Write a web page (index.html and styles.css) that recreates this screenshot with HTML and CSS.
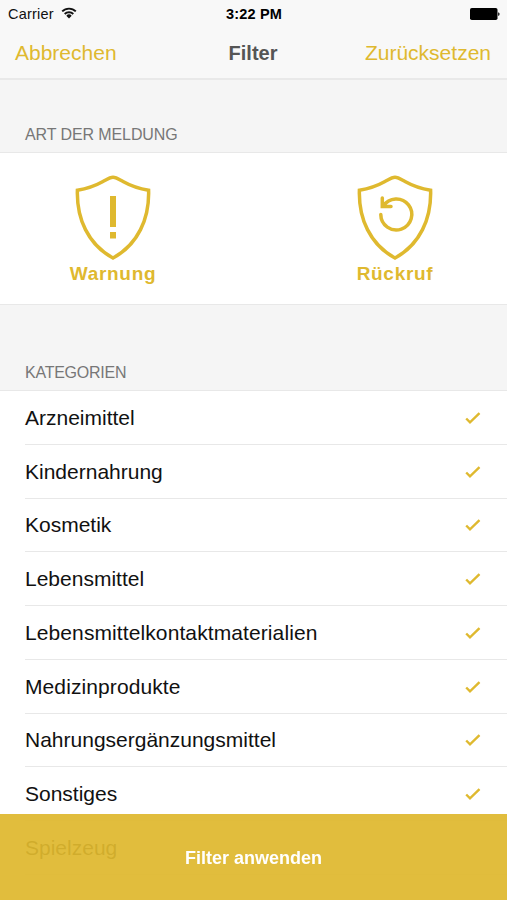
FILE: index.html
```html
<!DOCTYPE html>
<html lang="de">
<head>
    <meta charset="UTF-8">
    <meta name="viewport" content="width=device-width, initial-scale=1.0">
    <title>Filter</title>
    <link rel="stylesheet" href="styles.css">
</head>
<body>

    <header class="header">
        <div class="status-bar">
            <div class="carrier">
                <span class="carrier-name">Carrier</span>
                <svg class="wifi" viewBox="0 0 16 12">
                    <path d="M1.2 4.4a9.6 9.6 0 0 1 13.6 0M3.7 7a6.1 6.1 0 0 1 8.6 0" fill="none" stroke="#111" stroke-width="1.9"/>
                    <path d="M5.3 8.7a3.8 3.8 0 0 1 5.4 0L8 11.5z" fill="#111"/>
                </svg>
            </div>
            <span class="time">3:22 PM</span>
            <svg class="battery" viewBox="0 0 30 12">
                <rect x="0" y="0" width="27.5" height="12" rx="1.8"/>
                <path d="M28.2 4.2a2 2 0 0 1 0 3.8z"/>
            </svg>
        </div>
        <nav class="nav-bar">
            <a class="nav-link">Abbrechen</a>
            <h1 class="title">Filter</h1>
            <a class="nav-link reset">Zurücksetzen</a>
        </nav>
    </header>

    <h2 class="section-title">ART DER MELDUNG</h2>
    <div class="types">
        <div class="type">
            <svg class="shield" viewBox="0 0 80 88">
                <path d="M40 3.3C37 3.3 34 5.3 30 7.5C22.5 11.7 14 14.7 4.4 16.2C3.5 44.5 15 70.5 40 84C65 70.5 76.500 44.5 75.6 16.2C66 14.7 57.5 11.7 50 7.5C46 5.3 43 3.3 40 3.3Z"/>
                <path class="mark" d="M40 22v31M40 58v6.5"/>
            </svg>
            <span class="type-name">Warnung</span>
        </div>
        <div class="type">
            <svg class="shield" viewBox="0 0 80 88">
                <path d="M40 3.3C37 3.3 34 5.3 30 7.5C22.5 11.7 14 14.7 4.4 16.2C3.5 44.5 15 70.5 40 84C65 70.5 76.500 44.5 75.6 16.2C66 14.7 57.5 11.7 50 7.5C46 5.3 43 3.3 40 3.3Z"/>
                <path class="arrow" d="M25.8 40.5A15.500 15.500 0 1 0 28.3 32M27.3 24V32.4H36"/>
            </svg>
            <span class="type-name">Rückruf</span>
        </div>
    </div>

    <h2 class="section-title categories-title">KATEGORIEN</h2>
    <ul class="categories">
        <li><span>Arzneimittel</span><svg class="check" viewBox="0 0 16 12"><path d="M1.2 6.5L5 10.3L14.5 1.2"/></svg></li>
        <li><span>Kindernahrung</span><svg class="check" viewBox="0 0 16 12"><path d="M1.2 6.5L5 10.3L14.5 1.2"/></svg></li>
        <li><span>Kosmetik</span><svg class="check" viewBox="0 0 16 12"><path d="M1.2 6.5L5 10.3L14.5 1.2"/></svg></li>
        <li><span>Lebensmittel</span><svg class="check" viewBox="0 0 16 12"><path d="M1.2 6.5L5 10.3L14.5 1.2"/></svg></li>
        <li><span class="wide">Lebensmittelkontaktmaterialien</span><svg class="check" viewBox="0 0 16 12"><path d="M1.2 6.5L5 10.3L14.5 1.2"/></svg></li>
        <li><span class="wide">Medizinprodukte</span><svg class="check" viewBox="0 0 16 12"><path d="M1.2 6.5L5 10.3L14.5 1.2"/></svg></li>
        <li><span>Nahrungsergänzungsmittel</span><svg class="check" viewBox="0 0 16 12"><path d="M1.2 6.5L5 10.3L14.5 1.2"/></svg></li>
        <li><span>Sonstiges</span><svg class="check" viewBox="0 0 16 12"><path d="M1.2 6.5L5 10.3L14.5 1.2"/></svg></li>
        <li><span>Spielzeug</span></li>
    </ul>

    <button class="apply">Filter anwenden</button>

</body>
</html>
```
FILE: styles.css
```css
* {
    box-sizing: border-box;
}

body {
    margin: 0;
    height: 900px;
    overflow: hidden;
    background: #f5f5f5;
    font-family: "Liberation Sans", Arial, sans-serif;
    color: #111;
}

/* Header */
.header {
    height: 80px;
    background: #f8f8f8;
    border-bottom: 2px solid #e9e9e9;
}

.status-bar {
    display: grid;
    grid-template-columns: 1fr auto 1fr;
    align-items: center;
    height: 27px;
    padding: 0 7px 0 8px;
}

.carrier {
    display: flex;
    align-items: center;
    gap: 7px;
    font-size: 14.5px;
    letter-spacing: 0.2px;
}

.wifi {
    width: 16px;
    height: 12px;
    margin-top: -2px;
}

.time {
    font-size: 14.5px;
    font-weight: bold;
    letter-spacing: 0.2px;
    color: #000;
}

.battery {
    width: 30px;
    height: 12px;
    justify-self: end;
}

.nav-bar {
    display: grid;
    grid-template-columns: 1fr auto 1fr;
    align-items: center;
    height: 51px;
    padding: 0 16px 0 15px;
}

.nav-link {
    font-size: 21px;
    color: #dfb92f;
}

.reset {
    justify-self: end;
}

.title {
    margin: 0;
    padding-top: 1px;
    font-size: 20px;
    color: #555;
}

/* Section titles */
.section-title {
    display: flex;
    align-items: flex-end;
    height: 73px;
    margin: 0;
    padding: 0 25px 8px;
    border-bottom: 1px solid #e8e8e8;
    font-size: 16px;
    font-weight: normal;
    letter-spacing: -0.1px;
    color: #777;
}

.categories-title {
    height: 86px;
    letter-spacing: -0.25px;
}

/* Report types */
.types {
    display: flex;
    justify-content: space-between;
    height: 152px;
    padding: 21px 69px 0 70px;
    background: #fff;
    border-bottom: 1px solid #e8e8e8;
}

.type {
    display: flex;
    flex-direction: column;
    align-items: center;
    width: 86px;
}

.shield {
    width: 80px;
    height: 88px;
    flex: none;
    fill: none;
    stroke: #dfb92f;
    stroke-width: 3.5;
}

.shield .mark {
    stroke-width: 6;
}

.shield .arrow {
    stroke-linecap: round;
}

.type-name {
    font-size: 19px;
    font-weight: bold;
    line-height: 24px;
    letter-spacing: 0.7px;
    color: #dfb92f;
}

/* Category list */
.categories {
    list-style: none;
    margin: 0;
    padding: 0 0 0 25px;
    background: #fff;
}

.categories li {
    display: flex;
    justify-content: space-between;
    align-items: center;
    height: 53.75px;
    padding: 1px 26px 0 0;
    border-bottom: 1px solid #e8e8e8;
    font-size: 21px;
}

.categories .wide {
    letter-spacing: 0.1px;
}

.check {
    width: 16px;
    height: 12px;
    fill: none;
    stroke: #dfb92f;
    stroke-width: 2.4;
}

/* Apply button */
.apply {
    position: fixed;
    left: 0;
    bottom: 0;
    width: 100%;
    height: 86px;
    padding: 2px 0 0;
    border: none;
    background: rgba(223, 184, 46, 0.93);
    font-family: inherit;
    font-size: 18px;
    font-weight: bold;
    color: #fff;
}
```
